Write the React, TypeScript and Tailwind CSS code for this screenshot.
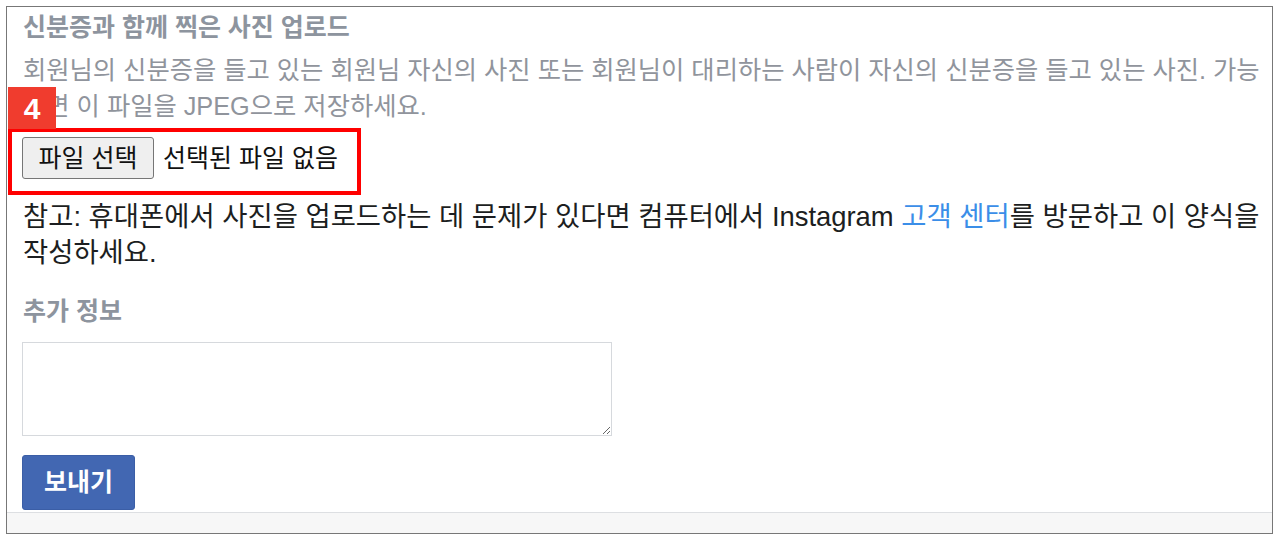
import React from 'react'

const FONT = { fontFamily: '"Liberation Sans", "Noto Sans CJK KR", sans-serif' }

function FileRow() {
  return (
    <div className="mt-[13px] flex items-center gap-[9px]">
      <button
        type="button"
        className="ml-[-1px] h-[42px] w-[132px] rounded-[3px] border border-[#767676] bg-[#efefef] text-[25px] leading-none text-[#111]"
      >
        파일 선택
      </button>
      <span className="text-[25px] leading-none text-[#111]">선택된 파일 없음</span>
    </div>
  )
}

export default function App() {
  return (
    <div className="min-h-screen bg-white pl-[6px] pt-[6px]" style={FONT}>
      <div className="relative flex h-[528px] w-[1267px] flex-col border border-[#777]">
        <div className="flex-1 pl-[16px] pr-[8px]">
          <div className="mt-[6px] text-[25px] font-bold leading-[28px] text-[#8d949e]">
            신분증과 함께 찍은 사진 업로드
          </div>
          <p className="mt-[11px] whitespace-nowrap text-[25.3px] leading-[36px] text-[#90949c]">
            회원님의 신분증을 들고 있는 회원님 자신의 사진 또는 회원님이 대리하는 사람이 자신의 신분증을 들고 있는 사진. 가능
            <br />
            하면 이 파일을 JPEG으로 저장하세요.
          </p>
          <FileRow />
          <p className="mt-[20px] whitespace-nowrap text-[27.4px] leading-[36px] text-[#1c1e21]">
            참고: 휴대폰에서 사진을 업로드하는 데 문제가 있다면 컴퓨터에서 Instagram{' '}
            <span className="text-[#3b8ee8]">고객 센터</span>를 방문하고 이 양식을
            <br />
            작성하세요.
          </p>
          <div className="mt-[26px] text-[25px] font-bold leading-[28px] text-[#8d949e]">추가 정보</div>
          <textarea className="mt-[17px] ml-[-1px] block h-[94px] w-[590px] border border-[#d6d9dd] bg-white" />
          <button
            type="button"
            className="mt-[19px] ml-[-1px] h-[55px] w-[113px] rounded-[3px] border border-[#3b5ea6] bg-[#4267b2] text-[25px] font-bold text-white"
          >
            보내기
          </button>
        </div>
        <div className="h-[21px] border-t border-[#dddfe2] bg-[#f7f7f7]" />

        <div className="absolute left-[1px] top-[121px] h-[67px] w-[353px] border-[4px] border-[#ff0000]" />
        <div className="absolute left-[1px] top-[80px] flex h-[42px] w-[48px] items-center justify-center bg-[#f03c2e] text-[30px] font-bold text-white">
          4
        </div>
      </div>
    </div>
  )
}
